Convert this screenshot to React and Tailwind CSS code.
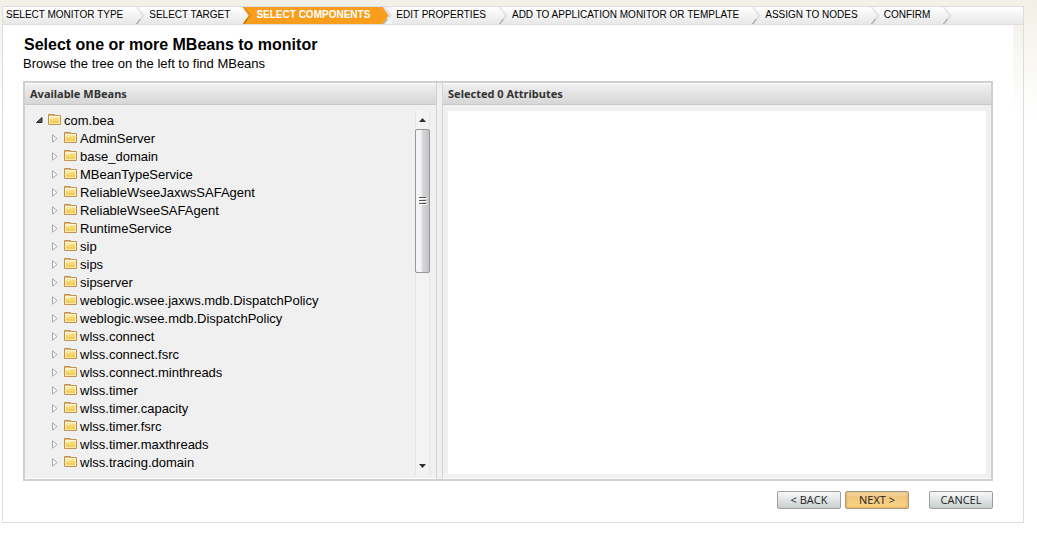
import React, { useState } from "react";

const steps = [
  "Select Monitor Type",
  "Select Target",
  "Select Components",
  "Edit Properties",
  "Add to Application Monitor or Template",
  "Assign to Nodes",
  "Confirm",
];

const beans = [
  "AdminServer",
  "base_domain",
  "MBeanTypeService",
  "ReliableWseeJaxwsSAFAgent",
  "ReliableWseeSAFAgent",
  "RuntimeService",
  "sip",
  "sips",
  "sipserver",
  "weblogic.wsee.jaxws.mdb.DispatchPolicy",
  "weblogic.wsee.mdb.DispatchPolicy",
  "wlss.connect",
  "wlss.connect.fsrc",
  "wlss.connect.minthreads",
  "wlss.timer",
  "wlss.timer.capacity",
  "wlss.timer.fsrc",
  "wlss.timer.maxthreads",
  "wlss.tracing.domain",
];

const Chevron = ({ fill, next }) => (
  <svg width="10" height="17" viewBox="0 0 10 17" className="shrink-0" aria-hidden="true">
    <defs>
      <linearGradient id="stepFill" x1="0" y1="0" x2="0" y2="1">
        <stop offset="0" stopColor="#ffffff" />
        <stop offset="1" stopColor="#e8e8e8" />
      </linearGradient>
    </defs>
    <rect width="10" height="17" fill={next} />
    <path d="M1 0L8 8.5L1 17" fill="none" stroke="#000" strokeOpacity="0.07" strokeWidth="3" />
    <path d="M5 12L1 17" fill="none" stroke="#000" strokeOpacity="0.18" strokeWidth="2" />
    <path d="M0 0L6 8.5L0 17Z" fill={fill} />
    <path d="M0 0L6 8.5L0 17" fill="none" stroke={fill === "#f99d1c" ? fill : "#f8f8f8"} />
  </svg>
);

const StepBar = ({ current }) => (
  <ol className="flex h-[18px] border-b border-[#dddddd] bg-gradient-to-b from-white to-[#e8e8e8] pl-[3px] text-[10px] leading-4 whitespace-nowrap uppercase">
    {steps.map((step, i) => (
      <li
        key={step}
        aria-current={i === current ? "step" : undefined}
        className={`flex ${
          i === current ? "bg-[#f99d1c] font-bold text-white" : "text-black"
        }`}
      >
        <span className={i === 0 ? "pr-3" : "pr-3 pl-1"}>{step}</span>
        <Chevron
          fill={i === current ? "#f99d1c" : "url(#stepFill)"}
          next={
            i + 1 === current ? "#f99d1c" : i === current ? "#f3f3f3" : "none"
          }
        />
      </li>
    ))}
  </ol>
);

const Folder = () => (
  <svg width="13" height="11" viewBox="0 0 13 11" className="mb-px shrink-0" aria-hidden="true">
    <path d="M0.5 0.5H6.5V1.5H12.5V10.5H0.5Z" fill="#fbe9a6" stroke="#c2914f" />
    <path d="M1 1H6V2H1Z" fill="#e3b57a" />
    <path d="M1 2.5H12" stroke="#fff8dc" />
    <path d="M2 9V5H6L7 4H11V9Z" fill="#f6d973" />
    <path d="M2 9V7H11V9Z" fill="#f1cd5a" />
  </svg>
);

const OpenArrow = () => (
  <svg width="7" height="6" viewBox="0 0 7 6" aria-hidden="true">
    <path d="M6 0.5V5.5H0.5Z" fill="#595959" stroke="#262626" />
  </svg>
);

const ClosedArrow = () => (
  <svg width="6" height="9" viewBox="0 0 6 9" aria-hidden="true">
    <path d="M0.5 0.8V8.2L5 4.5Z" fill="#fff" stroke="#a6a6a6" />
  </svg>
);

const TreeNode = ({ name, open, onToggle, children }) => (
  <li role="treeitem" aria-expanded={open}>
    <div className="flex h-[18px] items-center">
      <button
        type="button"
        aria-label={`Toggle ${name}`}
        onClick={onToggle}
        className="mr-[2px] flex h-4 w-[14px] items-center justify-center"
      >
        {open ? <OpenArrow /> : <ClosedArrow />}
      </button>
      <Folder />
      <span className="pt-[2px] pl-[3px] whitespace-nowrap">{name}</span>
    </div>
    {children}
  </li>
);

const ScrollBar = () => (
  <div className="flex w-[15px] shrink-0 flex-col border-x border-[#e6e6e6] bg-[#f3f3f3]" aria-hidden="true">
    <div className="flex h-[18px] items-center justify-center">
      <svg width="7" height="4" viewBox="0 0 7 4">
        <path d="M3.5 0L7 4H0Z" fill="#333" />
      </svg>
    </div>
    <div className="-mx-px flex h-36 items-center justify-center rounded-xs border border-[#979797] bg-gradient-to-r from-[#f5f5f5] from-35% via-[#d4d4d8] via-55% to-[#c4c4c8]">
      <svg width="8" height="9" viewBox="0 0 8 9">
        <path d="M0 0.5H7M0 3.5H7M0 6.5H7" stroke="#555" />
        <path d="M1 1.5H8M1 4.5H8M1 7.5H8" stroke="#fff" />
      </svg>
    </div>
    <div className="flex flex-1 items-end justify-center pb-[7px]">
      <svg width="7" height="4" viewBox="0 0 7 4">
        <path d="M0 0H7L3.5 4Z" fill="#333" />
      </svg>
    </div>
  </div>
);

const PanelTitle = ({ children }) => (
  <h2 className="h-[22px] border-t border-b border-t-white border-b-[#c8c8c8] bg-gradient-to-b from-[#f0f0f0] to-[#d6d6d6] pl-[5px] font-['Noto_Sans',sans-serif] text-[11px] leading-5 font-bold text-[#333333]">
    {children}
  </h2>
);

const WizardButton = ({ primary, children }) => (
  <button
    type="button"
    className={`h-[18px] w-16 rounded-xs border font-['Open_Sans',sans-serif] text-[11px] leading-4 text-[#222222] ${
      primary
        ? "border-[#a39a88] bg-gradient-to-b from-[#f6e3bd] via-[#f0c67c] via-30% to-[#fbd585] shadow-[inset_0_0_3px_#d99a3c]"
        : "border-[#9b9fa0] bg-gradient-to-b from-[#f8f9f9] to-[#c9cecf]"
    }`}
  >
    {children}
  </button>
);

const App = () => {
  const [rootOpen, setRootOpen] = useState(true);

  return (
    <div className="min-h-screen bg-[linear-gradient(#f2f0e6,#ffffff_116px)] pt-[6px] pr-[13px] pl-[2px] font-['Liberation_Sans',Arial,sans-serif] text-black">
      <div className="border border-[#dddddd]">
        <StepBar current={2} />

        <main className="mr-[10px] bg-white pt-[10px] pr-5 pb-[13px] pl-5">
          <h1 className="pl-px text-base leading-5 font-bold">
            Select one or more MBeans to monitor
          </h1>
          <p className="text-[13px] leading-[18px]">
            Browse the tree on the left to find MBeans
          </p>

          <div className="mt-2 grid grid-cols-[412fr_549fr] gap-x-[5px] border-2 border-[#d0d0d0] bg-[#f0f0f0]">
            <section className="flex min-w-0 flex-col border-r border-b border-r-[#d4d4d4] border-b-white">
              <PanelTitle>Available MBeans</PanelTitle>
              <div className="flex flex-1 pt-[6px] pr-[6px] pb-[3px]">
                <ul role="tree" className="min-w-0 flex-1 overflow-hidden pb-1 pl-[7px] text-[13px] leading-[18px]">
                  <TreeNode
                    name="com.bea"
                    open={rootOpen}
                    onToggle={() => setRootOpen(!rootOpen)}
                  >
                    {rootOpen && (
                      <ul role="group" className="pl-4">
                        {beans.map((bean) => (
                          <TreeNode key={bean} name={bean} open={false} />
                        ))}
                      </ul>
                    )}
                  </TreeNode>
                </ul>
                <ScrollBar />
              </div>
            </section>

            <section className="flex min-w-0 flex-col border-b border-l border-b-white border-l-[#d4d4d4]">
              <PanelTitle>Selected 0 Attributes</PanelTitle>
              <div className="mx-[5px] mt-[6px] mb-1 flex-1 bg-white" />
            </section>
          </div>

          <div className="mt-[10px] flex justify-end gap-1">
            <WizardButton>&lt; BACK</WizardButton>
            <WizardButton primary>NEXT &gt;</WizardButton>
            <div className="flex pl-4">
              <WizardButton>CANCEL</WizardButton>
            </div>
          </div>
        </main>
      </div>
    </div>
  );
};

export default App;
